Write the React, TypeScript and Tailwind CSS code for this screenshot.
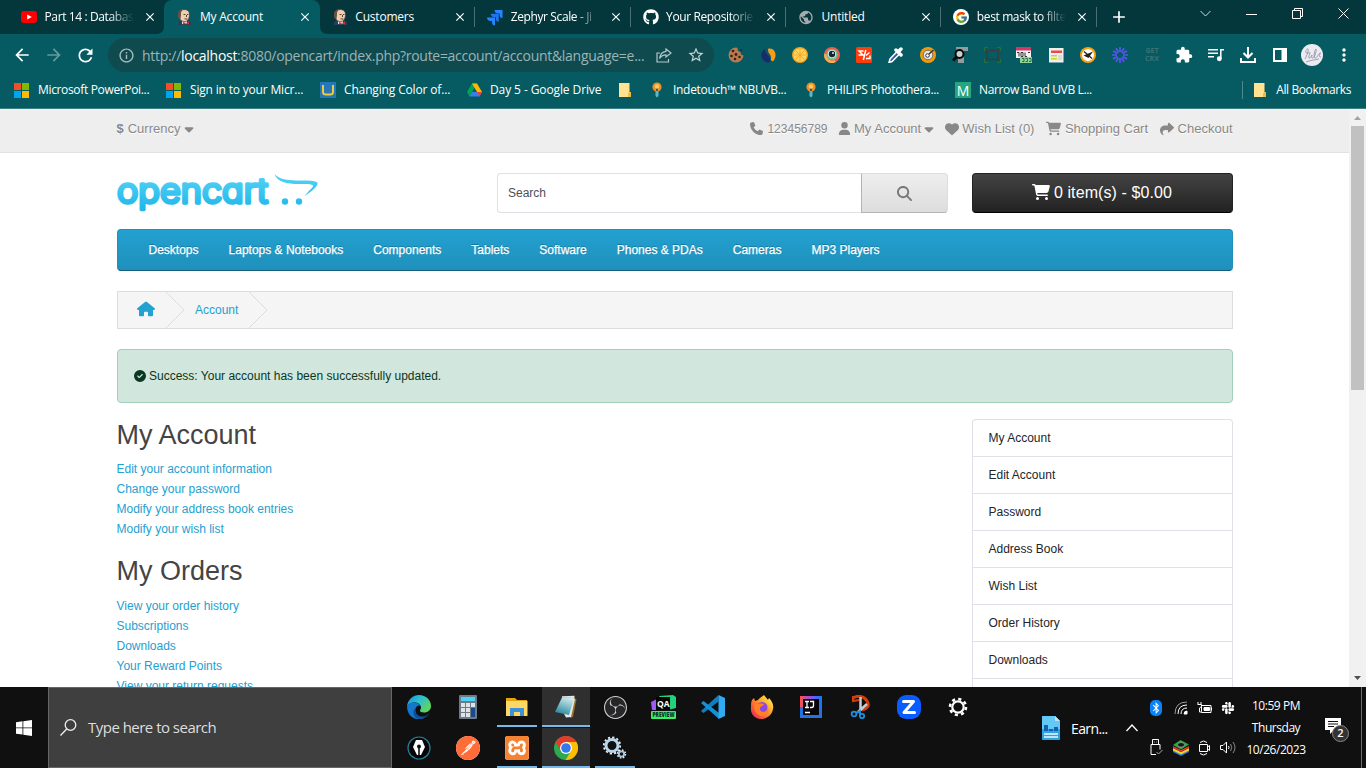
import React from "react";
import {
  FaCaretDown, FaPhone, FaUser, FaHeart, FaCartShopping, FaShare, FaHouse,
  FaCircleCheck, FaMagnifyingGlass, FaGithub, FaBluetoothB, FaSlack,
} from "react-icons/fa6";
import { FcGoogle } from "react-icons/fc";
import { SiXampp, SiPostman, SiObsstudio } from "react-icons/si";
import {
  MdArrowBack, MdArrowForward, MdRefresh, MdOutlineInfo, MdStarBorder, MdClose, MdAdd,
  MdExtension, MdMoreVert, MdPublic,
} from "react-icons/md";

/* ---------- browser icons ---------- */

const YouTube = () => (
  <svg width="16" height="16" viewBox="0 0 16 16"><rect y="2" width="16" height="12" rx="3" fill="#f00" /><path d="M6.200 5.400v5.200L10.800 8z" fill="#fff" /></svg>
);

const Butler = () => (
  <svg width="16" height="16" viewBox="0 0 16 16">
    <path d="M2 16v-2.500l3-2.500h7l3 2.500V16z" fill="#26405c" />
    <path d="M6 11h5v4H6z" fill="#e8e4da" />
    <path d="M2.500 6C2 2.500 4.500.5 8 .5s6 2 5.500 6-2 6-5 6-5.500-2-6-6.500z" fill="#ecd0b0" stroke="#4d3b33" strokeWidth=".8" />
    <path d="M2.300 9C1 3 4 .5 8 .5 5.500 1.500 4.800 3 5 6l-.5 4z" fill="#6b4f40" />
    <path d="M7.500 5.500h2M11 5.500h1.500M8.500 9.800l3 .3M10.500 6v2" stroke="#4a3026" strokeWidth=".9" />
    <path d="M7 13l3 1 3-1.400v3l-3-1-3 1z" fill="#d6302f" />
  </svg>
);

const Jira = () => (
  <svg width="17" height="17" viewBox="0 0 17 17">
    <path d="M8 .5h8.500V9C14.400 9 13.400 7.500 13.400 6V4.200h-1.700C9.500 4.200 8 3 8 .5z" fill="#2684ff" />
    <path d="M4 4.500h8.500V13c-2.100 0-3.100-1.500-3.100-3V8.200H7.700C5.500 8.200 4 7 4 4.500z" fill="#1f73ec" />
    <path d="M0 8.500h8.500V17c-2.100 0-3.100-1.500-3.100-3v-1.800H3.700C1.500 12.200 0 11 0 8.500z" fill="#2684ff" />
  </svg>
);

const GoogleDisc = () => (
  <span className="flex size-4 items-center justify-center rounded-full bg-white"><FcGoogle size={13} /></span>
);

const Microsoft = () => (
  <span className="grid size-[15px] grid-cols-2 gap-px">
    <i className="bg-[#f25022]" /><i className="bg-[#7fba00]" /><i className="bg-[#00a4ef]" /><i className="bg-[#ffb900]" />
  </span>
);

const Unesco = () => (
  <svg width="16" height="16" viewBox="0 0 16 16"><rect width="16" height="16" fill="#2577b8" /><path d="M3 3v7q0 2.500 3 2.500h4q3 0 3-2.500V3" fill="none" stroke="#f0c93c" strokeWidth="2" /></svg>
);

const Drive = () => (
  <svg width="15" height="14" viewBox="0 0 15 14">
    <path d="M5 .5h5L5 9l-2.500 4.500L0 9z" fill="#00a551" />
    <path d="M5 .5h5L15 9h-5z" fill="#ffba00" />
    <path d="M5 9h10l-2.500 4.500h-10z" fill="#3b7ded" />
    <path d="M10 9h5l-2.500 4.500z" fill="#ea4335" />
  </svg>
);

const Folder = () => (
  <svg width="12" height="14" viewBox="0 0 12 14"><path d="M0 0h10.500v9H12v5H0z" fill="#ffe390" /><path d="M10.500 9H12v5H9v-3.500z" fill="#e9bd45" /></svg>
);

const Bulb = () => (
  <svg width="12" height="16" viewBox="0 0 12 16"><circle cx="6" cy="5" r="4.600" fill="#f28c28" /><path d="M5 6h2v5H5z" fill="#555" /><circle cx="6" cy="4.500" r="2.300" fill="#fccb5b" /><path d="M4.500 9h3v5L6 15.500 4.500 14z" fill="#5fb6cb" /></svg>
);

const tabs = [
  { icon: <YouTube />, title: "Part 14 : Databas", fade: true },
  { icon: <Butler />, title: "My Account", active: true },
  { icon: <Butler />, title: "Customers", line: true },
  { icon: <Jira />, title: "Zephyr Scale - Ji", line: true, fade: true },
  { icon: <FaGithub size={16} />, title: "Your Repositorie", line: true, fade: true },
  { icon: <MdPublic size={17} className="text-[#a5abae]" />, title: "Untitled", line: true },
  { icon: <GoogleDisc />, title: "best mask to filte", line: true, fade: true },
];

function TabStrip() {
  return (
    <div className="flex h-[34px] bg-[#03373c] pl-[9px] text-white">
      {tabs.map((t, i) => (
        <div key={i} className={t.active ? "relative flex w-[155.4px] shrink-0 items-center rounded-t-lg bg-[#055b61] pl-3" : "relative flex w-[155.4px] shrink-0 items-center pl-3"}>
          {t.active && (
            <>
              <svg className="absolute bottom-0 -left-2" width="8" height="8"><path d="M8 0v8H0q8 0 8-8z" fill="#055b61" /></svg>
              <svg className="absolute bottom-0 -right-2" width="8" height="8"><path d="M0 0v8h8Q0 8 0 0z" fill="#055b61" /></svg>
            </>
          )}
          <span className="flex size-4 shrink-0 items-center justify-center">{t.icon}</span>
          <span className={t.fade ? "ml-[7.500px] w-[89px] text-[12px] tracking-[-0.38px] whitespace-nowrap [mask-image:linear-gradient(to_right,#000_72%,transparent)]" : "ml-[7.500px] w-[89px] text-[12px] tracking-[-0.2px] whitespace-nowrap"}>{t.title}</span>
          <MdClose size={14} className="ml-[9px] shrink-0" />
          {t.line && <i className="absolute top-[7px] right-0 h-5 w-px bg-[#4b7073]" />}
        </div>
      ))}
      <MdAdd size={20} className="mt-[7px] ml-3" />
      <div className="mt-2 ml-auto flex items-center gap-[35px] self-start pr-[17.500px]">
        <svg width="11" height="11" viewBox="0 0 11 11" fill="none" stroke="#cfdcdd"><path d="M.5 3l5 5 5-5" /></svg>
        <svg width="11" height="11" viewBox="0 0 11 11" stroke="#fff"><path d="M0 6.500h11" /></svg>
        <svg width="11" height="11" viewBox="0 0 11 11" fill="none" stroke="#fff"><path d="M.5 2.500h8v8h-8zM2.500 2.500v-2h8v8h-2" /></svg>
        <svg width="11" height="11" viewBox="0 0 11 11" stroke="#fff"><path d="M.5.5l10 10M10.500.5l-10 10" /></svg>
      </div>
    </div>
  );
}

const extensions = [
  <svg width="16" height="16" viewBox="0 0 16 16"><path d="M8 .5a7.500 7.500 0 1 0 7.500 8L13 7.500 12.500 5 10 4 9.500 1z" fill="#b9794f" /><g fill="#3a1f17"><circle cx="5" cy="4" r="1.300" /><circle cx="8" cy="7.500" r="1.400" /><circle cx="3.500" cy="9" r="1.300" /><circle cx="7" cy="12" r="1.300" /><circle cx="11.500" cy="10" r="1.300" /><circle cx="13" cy="3" r="1" /></g></svg>,
  <svg width="15" height="15" viewBox="0 0 15 15"><path d="M4 1C-2 5 0 13 6 14.500c4 .5 4-3.500 2-6S4 5 4 1z" fill="#182c6b" /><path d="M7.500.5c7-1 9 7 5 12.500-2 1-3-1-2.500-3.500S5.500 4 7.500.5z" fill="#f69b1c" /></svg>,
  <svg width="16" height="16" viewBox="0 0 16 16"><circle cx="8" cy="8" r="8" fill="#f5a21b" /><circle cx="8" cy="8" r="6.600" fill="#ffd25e" /><path d="M8 2v12M2 8h12M3.800 3.800l8.400 8.400M12.200 3.800l-8.400 8.400" stroke="#f5a21b" strokeWidth=".8" /></svg>,
  <svg width="16" height="16" viewBox="0 0 16 16"><circle cx="8" cy="8" r="8" fill="#ee5b4c" /><path d="M11 14A6.500 6.500 0 0 1 1.500 7" stroke="#f5b04a" strokeWidth="2.500" fill="none" /><circle cx="8" cy="7.500" r="5.600" fill="#6fc49a" /><circle cx="8" cy="7" r="4" fill="#dff5f5" /><circle cx="8" cy="7" r="3.200" fill="#142534" /><circle cx="9" cy="6" r=".9" fill="#fff" /></svg>,
  <svg width="16" height="16" viewBox="0 0 16 16"><rect width="16" height="16" rx="1.500" fill="#fe3d0b" /><path d="M7.500 4H3l4 4H2.500M9.800 3l-2.500 10M13.500 5.500L10 8.500M10 11.500h4v-3" stroke="#fff" strokeWidth="1.500" fill="none" /></svg>,
  <svg width="16" height="16" viewBox="0 0 16 16"><path d="M9 4.500l2.500 2.500-7.500 7.500L1 15.500l1-3.500z" fill="#3558b9" stroke="#fff" strokeWidth="1.500" /><path d="M8 3l5 5M10 5l3-3" stroke="#fff" strokeWidth="3.500" strokeLinecap="round" /></svg>,
  <svg width="16" height="16" viewBox="0 0 16 16"><circle cx="8" cy="8" r="8" fill="#f49b0b" /><circle cx="8" cy="8" r="4.800" fill="#e8e8e8" stroke="#555" strokeWidth=".8" /><circle cx="7.500" cy="8.500" r="1.800" fill="#fff" stroke="#333" /><path d="M9 7l4.500-4" stroke="#333" strokeWidth="1.500" /></svg>,
  <svg width="16" height="16" viewBox="0 0 16 16"><path d="M4 0h12v4h-4v3H5zM6 9h6v7H6z" fill="#929b9d" /><circle cx="7.500" cy="7" r="4" fill="#c8d0d0" stroke="#080808" strokeWidth="2" /><path d="M4.500 10L1 13.500" stroke="#080808" strokeWidth="3" /></svg>,
  <svg width="17" height="16" viewBox="0 0 17 16" fill="none"><rect x="3" y="3.500" width="11" height="9" stroke="#383c3d" strokeWidth="1.500" /><path d="M.5 4V.5H4M13 .5h3.500V4M.5 12v3.500H4M13 15.500h3.500V12" stroke="#24713a" /></svg>,
  <svg width="16" height="16" viewBox="0 0 16 16"><rect width="15" height="11" fill="#f4f4f4" /><path d="M0 0h15v3.500H0z" fill="#d83465" /><path d="M1 5.500h2v4M5 9.500v-4h2v4zM9 5.500v4h2M12 5.500h2" stroke="#333" fill="none" /><rect x="4" y="10" width="12" height="6" fill="#8fd59c" /><path d="M6 11.500h2v3H6M9.500 11.500h2v3h-2M13 11.500h2v3h-2" stroke="#1b5634" fill="none" strokeWidth=".8" /></svg>,
  <svg width="15" height="15" viewBox="0 0 15 15"><rect width="14.500" height="14.500" fill="#f1efec" /><path d="M2 2.500h11v2.500H2z" fill="#e84a50" /><path d="M2 7h6v1.500H2zM2 10h6v1.500H2z" fill="#c5d42f" /><path d="M9 7h4v5H9z" fill="#dcdad4" /></svg>,
  <svg width="16" height="16" viewBox="0 0 16 16"><circle cx="8" cy="8" r="8" fill="#f7a012" /><circle cx="8" cy="8" r="6" fill="#fff" /><path d="M4 4.500l8 7" stroke="#222" strokeWidth="1.300" /><path d="M3.500 8.500L13 4.500 8.500 11z" fill="#222" /></svg>,
  <svg width="16" height="16" viewBox="0 0 16 16" stroke="#5a55f4" strokeWidth="1.700"><path d="M8 0v5M8 11v5M0 8h5M11 8h5M1.100 4l4.300 2.500M10.600 9.500l4.300 2.500M4 1.100l2.500 4.300M9.500 10.600l2.500 4.300M12 1.100L9.500 5.400M6.500 10.600L4 14.900M14.900 4l-4.300 2.500M5.400 9.500L1.100 12" /></svg>,
  <span className="text-center text-[7px] leading-[8px] font-bold text-[#3b7175]">GET<br />CRX</span>,
  <MdExtension size={18} className="text-white" />,
  <svg width="16" height="14" viewBox="0 0 16 14" fill="none" stroke="#fff" strokeWidth="1.500"><path d="M0 1.800h10M0 5.300h10M0 8.800h6M12.800 11V1.800H16" /><circle cx="11.300" cy="10.700" r="1.700" fill="#fff" /></svg>,
  <svg width="16" height="16" viewBox="0 0 16 16" fill="none" stroke="#fff" strokeWidth="2"><path d="M8 0v9.500M3.500 6L8 10.500 12.500 6M1 11v4h14v-4" /></svg>,
  <svg width="14" height="14" viewBox="0 0 14 14"><path d="M1 1h12v12H1z" fill="none" stroke="#fff" strokeWidth="2" /><path d="M8.500 1H13v12H8.500z" fill="#fff" /></svg>,
  <svg width="22" height="22" viewBox="0 0 22 22"><circle cx="11" cy="11" r="11" fill="#ebebf0" /><path d="M4 15c2-4 4-9 3-10S3 9 6 9s3-1 3 0-2 4-1 5 3-3 3-3-1 4 1 3 4-9 3-9-3 8-1 9 3-4 5-5-3 4 1 4M5 18c5-2 9-2 13-3" fill="none" stroke="#8080a0" strokeWidth=".7" /></svg>,
  <MdMoreVert size={20} className="text-white" />,
];

function Toolbar() {
  return (
    <div className="flex h-[38px] items-center bg-[#055b61] pt-1 text-white">
      <MdArrowBack size={20} className="ml-3 shrink-0" />
      <MdArrowForward size={20} className="ml-3 shrink-0 text-[#659a9e]" />
      <MdRefresh size={21} className="ml-[11px] shrink-0" />
      <div className="ml-3 flex h-[34px] w-[606px] shrink-0 items-center rounded-full bg-[#0f4a4f] pl-2.5">
        <MdOutlineInfo size={17} className="shrink-0 text-[#a5bcbe]" />
        <span className="ml-[7px] w-[508px] shrink-0 text-[14px] tracking-[-0.29px] whitespace-nowrap text-[#9bb4b6]">http://<span className="text-white">localhost</span>:8080/opencart/index.php?route=account/account&amp;language=e...</span>
        <svg className="ml-1.5 shrink-0" width="16" height="16" viewBox="0 0 16 16" fill="none" stroke="#b3c6c8" strokeWidth="1.200"><path d="M4 6H1v9h11.500v-3M10 2l5 4-5 4V7.800C7 7.800 5 9 3.500 11.500 4 7.500 6 4.800 10 4.300z" /></svg>
        <MdStarBorder size={18} className="ml-[15px] shrink-0 text-[#c5d4d5]" />
      </div>
      <div className="ml-1.5 flex">
        {extensions.map((e, i) => <span key={i} className="flex w-8 shrink-0 items-center justify-center">{e}</span>)}
      </div>
    </div>
  );
}

function Bookmarks() {
  return (
    <div className="flex h-9 items-center bg-[#055b61] pl-3.5 text-[12px] tracking-[-0.15px] whitespace-nowrap text-white">
      <span className="flex w-[152px] items-center gap-[9px] tracking-[-0.34px]"><Microsoft />Microsoft PowerPoi...</span>
      <span className="flex w-[154px] items-center gap-[9px] tracking-[-0.18px]"><Microsoft />Sign in to your Micr...</span>
      <span className="flex w-[147px] items-center gap-2"><Unesco />Changing Color of...</span>
      <span className="flex w-[152px] items-center gap-2 tracking-[-0.1px]"><Drive />Day 5 - Google Drive</span>
      <span className="flex w-[32px]"><Folder /></span>
      <span className="flex w-[154px] items-center gap-[10px] tracking-[-0.3px]"><Bulb />Indetouch™ NBUVB...</span>
      <span className="flex w-[150px] items-center gap-[10px] tracking-[-0.32px]"><Bulb />PHILIPS Photothera...</span>
      <span className="flex items-center gap-2 tracking-[-0.35px]"><span className="flex size-4 items-center justify-center bg-[#24a780] text-[14px] tracking-normal">M</span>Narrow Band UVB L...</span>
      <span className="ml-auto flex items-center gap-[10px] border-l border-[#4f898d] pr-[15px] pl-[11px] tracking-[-0.4px]"><Folder />All Bookmarks</span>
    </div>
  );
}

/* ---------- shop page ---------- */

function TopBar() {
  return (
    <div className="h-11 border-b border-[#e2e2e2] bg-[#eee] pr-[116.500px] pl-[116.500px] text-[13px] text-[#888] [text-shadow:0_1px_0_#fff]">
      <div className="flex h-[39px] items-center whitespace-nowrap">
        <b>$</b><span className="ml-1">Currency</span><FaCaretDown size={14} className="ml-0.5" />
        <span className="ml-auto flex items-center gap-1"><FaPhone size={13} /><span className="text-[12px]">123456789</span></span>
        <span className="ml-[10.500px] flex items-center"><FaUser size={13} /><span className="ml-[3px]">My Account</span><FaCaretDown size={14} className="ml-px" /></span>
        <span className="ml-[9px] flex items-center gap-[3px]"><FaHeart size={14} />Wish List (0)</span>
        <span className="ml-3 flex items-center gap-[3.500px]"><FaCartShopping size={15} />Shopping Cart</span>
        <span className="ml-[11.500px] flex items-center gap-1"><FaShare size={14} />Checkout</span>
      </div>
    </div>
  );
}

function Logo() {
  return (
    <svg width="202" height="42" viewBox="0 0 202 42">
      <defs><linearGradient id="brand" x1="0" y1="0" x2="0" y2="42" gradientUnits="userSpaceOnUse"><stop offset=".1" stopColor="#4fd0f4" /><stop offset=".8" stopColor="#22b8eb" /></linearGradient></defs>
      <text x="1" y="28.500" fontFamily="Inter, sans-serif" fontWeight="300" fontSize="34" textLength="151" lengthAdjust="spacingAndGlyphs" fill="url(#brand)" stroke="url(#brand)" strokeWidth="3.400" strokeLinejoin="round" className="[font-feature-settings:'cv11']">opencart</text>
      <path d="M158.500 0c5 6 15 6.500 26 6.500 12 0 18 .5 17 3.500-1 4-7 8-13 12 4-5 9-9 8.500-10.500-.5-1.500-8-1.500-14-1.500-12 0-22-2-24.500-10z" fill="url(#brand)" />
      <circle cx="169" cy="27.500" r="3.200" fill="url(#brand)" /><circle cx="183" cy="27.500" r="3.200" fill="url(#brand)" />
    </svg>
  );
}

const menu = ["Desktops", "Laptops & Notebooks", "Components", "Tablets", "Software", "Phones & PDAs", "Cameras", "MP3 Players"];
const sideLinks = ["My Account", "Edit Account", "Password", "Address Book", "Wish List", "Order History", "Downloads", "Subscriptions"];

const Chevron = () => (
  <svg width="19" height="36" viewBox="0 0 19 36" fill="none" stroke="#ddd"><path d="M0 0l18 18L0 36" /></svg>
);

function Shop() {
  return (
    <div className="w-[1349px] overflow-hidden bg-white font-['Liberation_Sans',Arial,sans-serif] text-[12px]">
      <TopBar />
      <div className="ml-[117px] w-[1116px]">
        <div className="flex h-[76px] items-start pt-5">
          <div className="-ml-px w-[381px] pt-px"><Logo /></div>
          <div className="flex h-10 w-[451px]">
            <div className="flex w-[364px] items-center rounded-l border border-r-0 border-[#dee2e6] pl-2.5 text-[#495057]">Search</div>
            <div className="flex flex-1 items-center justify-center rounded-r border border-[#ddd] border-b-[#b3b3b3] border-l-[#b3b3b3] bg-linear-to-b from-[#eee] to-[#ddd] text-[#777]"><FaMagnifyingGlass size={15} /></div>
          </div>
          <div className="ml-6 flex h-10 w-[261px] items-center justify-center gap-1 rounded border border-[#222] border-b-black bg-linear-to-b from-[#444] to-[#222] pr-px text-[16px] tracking-[0.1px] text-white"><FaCartShopping size={18} className="mb-0.5" />0 item(s) - $0.00</div>
        </div>
        <div className="flex h-[42px] items-center gap-[30px] rounded border border-[#1f90bb] border-b-[#145e7a] bg-linear-to-b from-[#23a1d1] to-[#1f90bb] pl-[30.500px] text-white [text-shadow:0_-1px_0_rgba(0,0,0,0.25)]">
          {menu.map((m) => <span key={m} className="[-webkit-text-stroke:0.25px_white]">{m}</span>)}
        </div>
        <div className="mt-5 flex h-[38px] items-center border border-[#ddd] bg-[#f5f5f5] pl-[19px] text-[#23a1d1]">
          <FaHouse size={18} className="mr-[10.500px] mb-[3px] [transform:scaleY(0.92)]" /><Chevron /><span className="mr-[11px] ml-[10.500px]">Account</span><Chevron />
        </div>
        <div className="mt-5 flex h-[54px] items-center rounded border border-[#a3cfbb] bg-[#d1e7dd] pl-4 text-[#0a3622]">
          <FaCircleCheck size={12} className="mr-[3px] mb-px" />Success: Your account has been successfully updated.
        </div>
        <div className="mt-4 flex justify-between">
          <div className="-ml-[0.500px] text-[#23a1d1]">
            <h2 className="mb-2 text-[27px] leading-8 text-[#444]">My Account</h2>
            <div className="leading-5"><p>Edit your account information</p><p>Change your password</p><p>Modify your address book entries</p><p>Modify your wish list</p></div>
            <h2 className="mt-4 mb-[9px] text-[27px] leading-8 text-[#444]">My Orders</h2>
            <div className="leading-5"><p>View your order history</p><p>Subscriptions</p><p>Downloads</p><p>Your Reward Points</p><p>View your return requests</p></div>
          </div>
          <div className="w-[261px] rounded-t border border-b-0 border-[#dee2e6] text-[#212529]">
            {sideLinks.map((s) => <div key={s} className="flex h-[37px] items-center border-b border-[#dee2e6] pl-[15.500px]">{s}</div>)}
          </div>
        </div>
      </div>
    </div>
  );
}

function Scrollbar() {
  return (
    <div className="flex w-[17px] flex-col items-center bg-[#f1f1f1]">
      <svg width="17" height="17" viewBox="0 0 17 17"><path d="M5 11l3.500-4 3.500 4z" fill="#a3a3a3" /></svg>
      <div className="h-[264px] w-[13px] bg-[#c1c1c1]" />
      <svg className="mt-auto" width="17" height="17" viewBox="0 0 17 17"><path d="M5 6l3.500 4L12 6z" fill="#505050" /></svg>
    </div>
  );
}

/* ---------- taskbar ---------- */

const Edge = () => (
  <svg width="24" height="24" viewBox="0 0 24 24">
    <defs><linearGradient id="edgeTop" x1="0" y1="0" x2="1" y2=".6"><stop offset="0" stopColor="#1a8fdc" /><stop offset=".5" stopColor="#2bbfd3" /><stop offset="1" stopColor="#61d65b" /></linearGradient></defs>
    <path d="M0 11C1 4.500 6 0 12 0c7 0 12 5 12 11 0 4-3 6.500-7 6.500-3 0-4-1-4-2 0-.8 1-1.500 1-3C14 9 10 7 6.500 7.500 3 8 1 9.500 0 11z" fill="url(#edgeTop)" />
    <path d="M0 11c1-2 4-4 8-3.500 2.500.4 4.500 1.500 5.500 3-4-.5-6 2.500-5 6.500 1 4 5 6.500 8.500 6-7 3.500-17-.500-17-12z" fill="#1477cb" />
    <path d="M8.500 13c-1 4 1.500 8 6 8.500 3.500.3 6.500-1.500 8-4-2 5-7 7-11.500 6.300C6 22.500 5 16 8.500 13z" fill="#0c4f9a" />
  </svg>
);
const Calculator = () => (
  <svg width="18" height="24" viewBox="0 0 18 24"><rect width="18" height="24" rx="1" fill="#6e7a86" /><path d="M2 2h14v4H2z" fill="#4bd4f7" /><path d="M2 8h4v4H2zM7 8h4v4H7zM12 8h4v4h-4zM2 13h4v4H2zM7 13h4v4H7zM2 18h4v4H2zM7 18h4v4H7z" fill="#dfe3e7" /><path d="M12 13h4v9h-4z" fill="#174b8b" /></svg>
);
const Explorer = () => (
  <svg width="22" height="20" viewBox="0 0 22 20"><path d="M0 1h9l2 2h10v5H0z" fill="#e5a50e" /><path d="M0 4h21.500v15H0z" fill="#ffd766" /><path d="M4 19v-8h14v8h-4v-4H8v4z" fill="#3c91d8" /></svg>
);
const Notepad = () => (
  <svg width="24" height="24" viewBox="0 0 24 24"><defs><linearGradient id="pad" x1=".7" y1="0" x2=".3" y2="1"><stop offset="0" stopColor="#d3edf0" /><stop offset=".5" stopColor="#7fbcc8" /><stop offset="1" stopColor="#23859a" /></linearGradient></defs><path d="M20 3l2.500 1-3.500 18-3 1z" fill="#9b702b" /><path d="M9 17l9-14 2 .5 1 .5-4 18-5 .5z" fill="#e3e8e8" /><path d="M8 2.500l12.500-.5L15 20 1 17z" fill="url(#pad)" /><path d="M8 2l12.500-.5" stroke="#e5e5e5" strokeWidth="1.500" /></svg>
);
const Obs = () => (
  <span className="flex size-[23px] items-center justify-center rounded-full bg-[#272629] text-[#cfcfcf]"><SiObsstudio size={23} /></span>
);
const Qa = () => (
  <svg width="26" height="26" viewBox="0 0 26 26"><path d="M8 2l14-1 3 2v11l-8 2z" fill="#20d17d" /><path d="M0 8l8-4 2 12-9 0z" fill="#a25af7" /><path d="M5 3h14v13H5z" fill="#050505" /><text x="6" y="12.500" fontFamily="Open Sans, sans-serif" fontWeight="700" fontSize="8.500" fill="#fff">QA</text><rect y="17" width="25" height="8" rx="1" fill="#3fec6d" /><text x="1.500" y="23.300" fontFamily="Open Sans, sans-serif" fontWeight="800" fontSize="6.500" textLength="22" lengthAdjust="spacingAndGlyphs" fill="#05351a">PREVIEW</text></svg>
);
const VsCode = () => (
  <svg width="24" height="24" viewBox="0 0 24 24"><path d="M17.500 0v6.500L2.500 18 0 16z" fill="#0e7fc4" /><path d="M0 8l2.500-2 15.500 12v6z" fill="#1690d4" /><path d="M17.500 0L24 3v18l-6.500 3z" fill="#31aaf2" /></svg>
);
const Firefox = () => (
  <svg width="24" height="24" viewBox="0 0 24 24"><defs><linearGradient id="fox" x1="1" y1="0" x2="0" y2="1"><stop offset=".1" stopColor="#fff04b" /><stop offset=".5" stopColor="#ff8b25" /><stop offset="1" stopColor="#ee1461" /></linearGradient></defs><path d="M2 5l2-2 1 3 3-1c1-2 4-3 6-5 1 2 3 3 4 5l1-2c3 3 5 7 4 11-1 6-6 10-12 10C5 24 0 19 1 12c0-3 0-5 1-7z" fill="url(#fox)" /><circle cx="12" cy="12.500" r="5.500" fill="#8b48e4" /><path d="M5 8c3 2 8-1 9 2-2 1-5 2-4 5 3 4 8 1 8-3 2 7-4 11-9 8-4-2-6-7-4-12z" fill="#ff8026" /></svg>
);
const IntelliJ = () => (
  <svg width="22" height="22" viewBox="0 0 22 22"><defs><linearGradient id="ij" x1="0" y1="0" x2="1" y2="0"><stop offset="0" stopColor="#fe5145" /><stop offset=".4" stopColor="#a84ae0" /><stop offset="1" stopColor="#087cfa" /></linearGradient></defs><rect width="22" height="22" fill="#2673df" /><path d="M0 0h22v11H0z" fill="url(#ij)" /><path d="M3 3h16v16H3z" fill="#08060a" /><path d="M5 5.500h4M7 5.500v6M5 11.500h4M10 5.500h3.500v4q0 2-2 2H10M5 16.500h5" stroke="#fff" strokeWidth="1.300" fill="none" /></svg>
);
const Snip = () => (
  <svg width="24" height="24" viewBox="0 0 24 24" fill="none" className="ml-1"><path d="M3 3c5-3 11-2 14 3 3 5 0 8-5 9" stroke="#d23f0c" strokeWidth="3" /><path d="M3 1v5l6-1" stroke="#d23f0c" strokeWidth="2" /><path d="M10.500 2v14M17 9L8 17" stroke="#c8ced1" strokeWidth="2.500" /><circle cx="4" cy="19" r="2.400" stroke="#1b91df" strokeWidth="1.800" /><circle cx="12" cy="21" r="2.200" stroke="#1b91df" strokeWidth="1.800" /><path d="M6 18l4-2v3" stroke="#1b91df" strokeWidth="2" /></svg>
);
const Zoom = () => (
  <svg width="24" height="24" viewBox="0 0 24 24"><rect width="24" height="24" rx="9" fill="#0b5cff" /><path d="M6.500 6.500h10L7 17.500h10.500" fill="none" stroke="#fff" strokeWidth="3" strokeLinejoin="round" strokeLinecap="round" /></svg>
);
const Settings = () => (
  <svg width="20" height="20" viewBox="0 0 20 20" fill="none" stroke="#fff"><circle cx="10" cy="10" r="5.700" strokeWidth="2.200" /><circle cx="10" cy="10" r="8" strokeWidth="2.600" strokeDasharray="3.140 3.140" /></svg>
);
const Pen = () => (
  <svg width="24" height="24" viewBox="0 0 24 24"><circle cx="12" cy="12" r="11" fill="#060606" stroke="#25809b" strokeWidth="1.200" /><path d="M9 4h6l3 7-4 8h-4l-4-8z" fill="#fff" /><path d="M12 11v8" stroke="#111" strokeWidth="1.600" /><circle cx="12" cy="10.500" r="2" fill="#111" /></svg>
);
const Postman = () => (
  <span className="flex size-6 items-center justify-center rounded-full bg-white text-[#ff6c37]"><SiPostman size={24} /></span>
);
const Xampp = () => (
  <span className="flex size-6 items-center justify-center rounded-[3px] bg-white text-[#f58232]"><SiXampp size={24} /></span>
);
const Chrome = () => (
  <svg width="24" height="24" viewBox="0 0 24 24"><circle cx="12" cy="12" r="12" fill="#2da94f" /><path d="M1.600 6A12 12 0 0 1 22.400 6H12L7 15z" fill="#e33b2e" /><path d="M22.400 6A12 12 0 0 1 11.500 24l5.500-9-5-9z" fill="#fdbd00" /><circle cx="12" cy="12" r="6" fill="#fff" /><circle cx="12" cy="12" r="4.800" fill="#3478ed" /></svg>
);
const Gears = () => (
  <svg width="24" height="24" viewBox="0 0 24 24" fill="none"><circle cx="9" cy="9.500" r="6" stroke="#b8d5ea" strokeWidth="3" /><circle cx="9" cy="9.500" r="8.200" stroke="#e6f0f7" strokeWidth="1.800" strokeDasharray="2.150 2.140" /><circle cx="18.500" cy="18" r="2.600" stroke="#a6c4dc" strokeWidth="1.900" /><circle cx="18.500" cy="18" r="4" stroke="#e1eef5" strokeWidth="1.500" strokeDasharray="1.600 1.540" /></svg>
);

type Task = { icon: React.ReactNode; open?: boolean; focus?: boolean };
const rowOne: Task[] = [
  { icon: <Edge /> }, { icon: <Calculator /> }, { icon: <Explorer />, open: true }, { icon: <Notepad />, focus: true },
  { icon: <Obs /> }, { icon: <Qa /> }, { icon: <VsCode /> }, { icon: <Firefox /> }, { icon: <IntelliJ /> },
  { icon: <Snip /> }, { icon: <Zoom /> }, { icon: <Settings /> },
];
const rowTwo: Task[] = [
  { icon: <Pen /> }, { icon: <Postman /> }, { icon: <Xampp />, open: true }, { icon: <Chrome />, focus: true }, { icon: <Gears />, open: true },
];

function TaskRow({ items }: { items: Task[] }) {
  return (
    <div className="flex h-10 gap-px">
      {items.map((t, i) => (
        <span key={i} className={t.focus ? "flex w-12 flex-col items-center bg-[#2f2f2f]" : "flex w-12 flex-col items-center"}>
          <span className="flex h-[38px] items-center justify-center pt-0.5">{t.icon}</span>
          {t.focus && <i className="h-0.5 w-12 bg-[#76b9ed]" />}
          {t.open && <i className="h-0.5 w-10 bg-[#76b9ed]" />}
        </span>
      ))}
    </div>
  );
}

function Tray() {
  return (
    <div className="ml-auto flex h-full items-center text-white">
      <svg width="19" height="24" viewBox="0 0 19 24"><path d="M0 1q0-1 1-1h12l5 5v18q0 1-1 1H1q-1 0-1-1z" fill="#2ba5ea" /><path d="M0 1q0-1 1-1h12l5 5v8H0z" fill="#64c8f7" /><path d="M13 0v5h5z" fill="#b8e7fc" /><path d="M2 9h4v6H2zM7 13h4v2H7zM12 11h4v4h-4z" fill="#145fae" /><path d="M2 18h14M2 21h14" stroke="#eef9ff" strokeWidth="1.500" /></svg>
      <span className="mt-0.5 ml-2.5 w-[55px] text-[14px] tracking-[-0.6px]">Earn...</span>
      <svg width="12" height="8" viewBox="0 0 12 8" fill="none" stroke="#fff" strokeWidth="1.300"><path d="M.5 7L6 1l5.500 6" /></svg>
      <div className="ml-1.5 grid grid-cols-[24px_25px_23px_24px] grid-rows-[40px_40px] place-items-center">
        <span className="flex h-4 w-3 items-center justify-center rounded-[5px] bg-[#0883f5]"><FaBluetoothB size={12} /></span>
        <svg width="14" height="14" viewBox="0 0 14 14" fill="none" stroke="#fff"><path d="M1 13Q1 1 13 1" stroke="#999" /><path d="M4 13Q4 4 13 4M7 13q0-6 6-6" /><path d="M10 13q0-3 3-3v3z" fill="#fff" /></svg>
        <svg width="16" height="12" viewBox="0 0 16 12" fill="none" stroke="#fff"><path d="M4.500 3.500h9.500v7H4.500z M14.500 5.500v3" /><path d="M7 5.500h5.500v3H7z" fill="#fff" /><path d="M1 0v2M4 0v2M.5 2.500h4v2l-2 1.500v4h2" fill="#111" /></svg>
        <FaSlack size={14} />
        <svg width="14" height="17" viewBox="0 0 14 17" fill="none" stroke="#fff"><path d="M3.500 5V.5h6V5M2 5.500h9v5M2 5.500v10h5M5.500 3h.5M7.500 3H8" /><path d="M7.500 13l2 2 4-4" stroke="#aaa" /></svg>
        <svg width="16" height="16" viewBox="0 0 16 16"><path d="M0 9.500l8 4 8-4V12l-8 4-8-4z" fill="#2778d6" /><path d="M0 8l8 4 8-4v2.500l-8 4-8-4z" fill="#f2d22e" /><path d="M0 6l8 4 8-4v2l-8 4-8-4z" fill="#e4332a" /><path d="M0 5l7.500-5L16 4.500 8 9.500z" fill="#29a940" /><ellipse cx="8" cy="4.800" rx="3.500" ry="2.300" fill="#161616" stroke="#aaa" strokeWidth=".7" /></svg>
        <svg width="14" height="16" viewBox="0 0 14 16" fill="none" stroke="#fff"><path d="M1.500 4.500h8v7h-8zM9.500 7l2-1.500v5L9.500 9M2 2.500Q5.500-.5 9 2.500" /><path d="M2 13.500q3.500 3 7 0" /></svg>
        <svg width="16" height="13" viewBox="0 0 16 13" fill="none" stroke="#fff"><path d="M.5 4.500H3L6.500 1v11L3 8.500H.5zM8.500 5q1 1.500 0 3" /><path d="M10.500 3q2.500 3.500 0 7M13 1q4 5.500 0 11" stroke="#8c8c8c" /></svg>
      </div>
      <div className="ml-[5.500px] w-[61px] text-center text-[12px] leading-[22px] tracking-[-0.45px] whitespace-nowrap">
        <p>10:59 PM</p><p>Thursday</p><p>10/26/2023</p>
      </div>
      <span className="relative ml-[18.500px] flex h-5 w-9 items-start">
        <svg width="16" height="17" viewBox="0 0 16 17"><path d="M0 0h16v12H9l-4 4v-4H0z" fill="#fff" /><path d="M3 3.500h10M3 6h10M3 8.500h6" stroke="#111" /></svg>
        <span className="absolute top-[7px] left-[7px] flex size-[17px] items-center justify-center rounded-full border border-[#888] bg-[#333] text-[11px] font-semibold">2</span>
      </span>
      <i className="mr-1 h-full w-px bg-[#6b6b6b]" />
    </div>
  );
}

function Taskbar() {
  return (
    <div className="flex h-[81px] bg-[#101010]">
      <div className="flex w-12 items-center justify-center">
        <svg width="16" height="16" viewBox="0 0 16 16" fill="#fff"><path d="M0 2.200L6.500 1.300v6.200H0zM7.300 1.200L16 0v7.500H7.300zM0 8.300h6.500v6.200L0 13.700zM7.300 8.300H16V16l-8.700-1.200z" /></svg>
      </div>
      <div className="flex w-[344px] items-center border border-[#666] bg-[#3f3f3f] pl-[11px] text-[15px] text-[#dedede]">
        <svg width="17" height="17" viewBox="0 0 17 17" fill="none" stroke="#eee" strokeWidth="1.300"><circle cx="10.500" cy="6" r="5.300" /><path d="M6.700 10L.5 16.500" /></svg>
        <span className="ml-[11px] tracking-[-0.52px]">Type here to search</span>
      </div>
      <div className="ml-[3px] flex flex-col gap-px"><TaskRow items={rowOne} /><TaskRow items={rowTwo} /></div>
      <Tray />
    </div>
  );
}

export default function App() {
  return (
    <div className="flex h-[768px] w-[1366px] flex-col overflow-hidden font-['Open_Sans','Noto_Sans',sans-serif]">
      <TabStrip />
      <Toolbar />
      <Bookmarks />
      <div className="flex h-[579px] border-t border-[#3f8085]"><Shop /><Scrollbar /></div>
      <Taskbar />
    </div>
  );
}
